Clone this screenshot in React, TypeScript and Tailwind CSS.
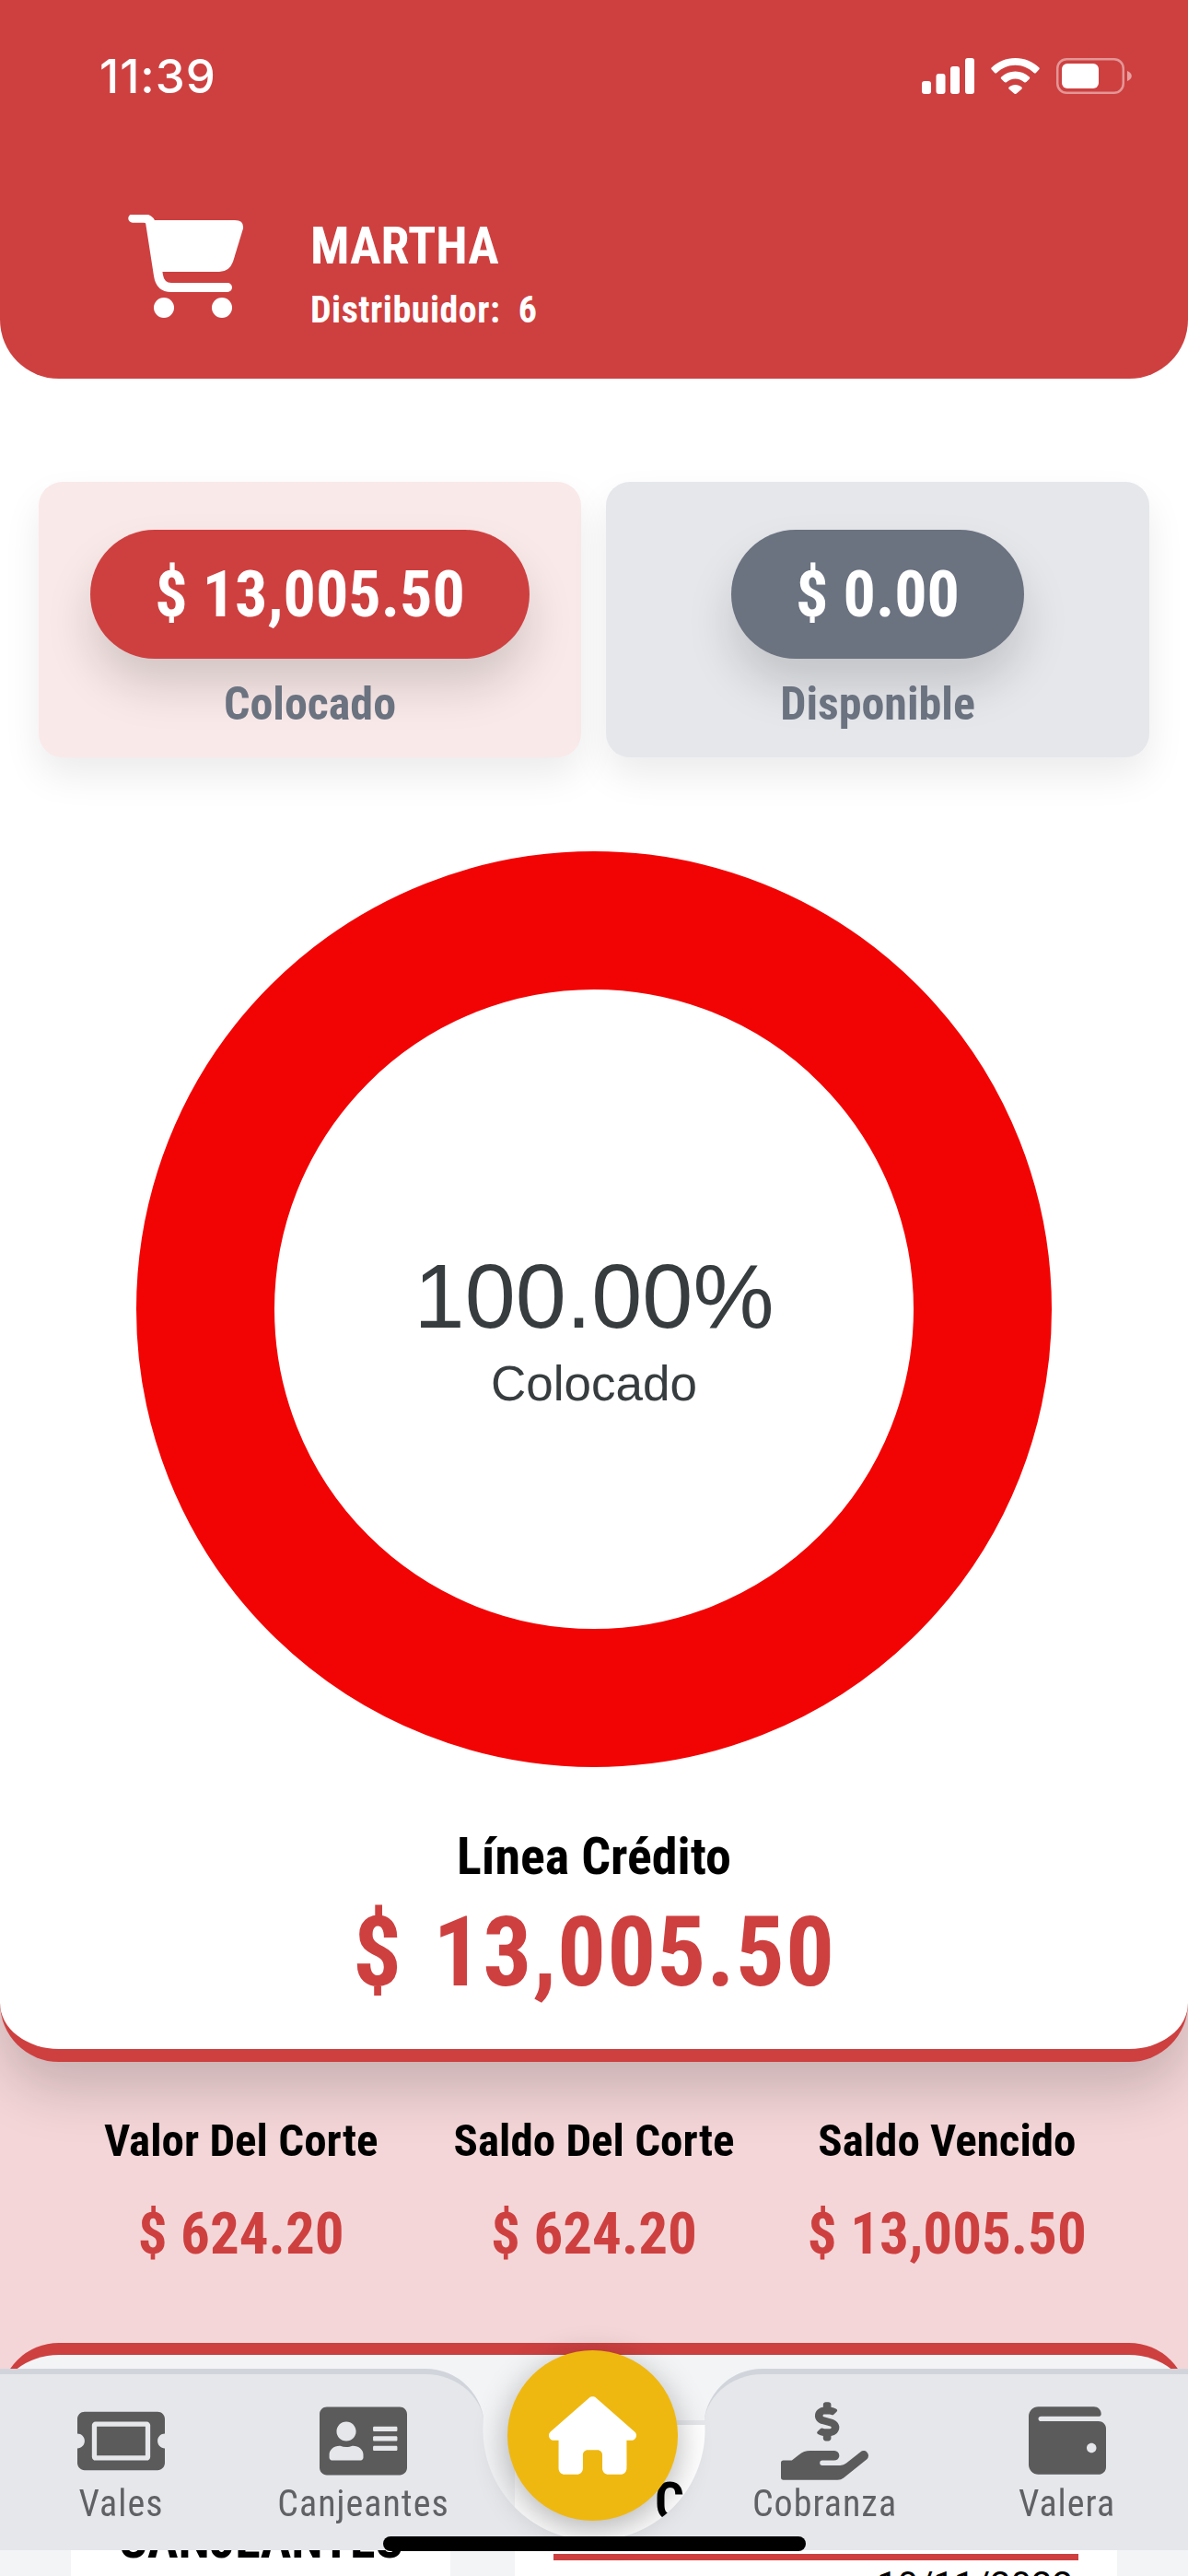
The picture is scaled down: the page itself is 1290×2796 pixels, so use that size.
import { FaAddressCard, FaHandHoldingUsd, FaTicketAlt, FaWallet } from "react-icons/fa";
import { FaHouse } from "react-icons/fa6";

const CONDENSED = "font-['Roboto_Condensed','Roboto',sans-serif] font-stretch-[75%]";

function StatusBar() {
  return (
    <div className="flex h-[40px] items-center justify-between pl-[108px] pr-[61px] text-white">
      <span className="font-['Inter',sans-serif] text-[51px] leading-none font-medium tracking-[1px]">11:39</span>
      <div className="flex items-end gap-[18px]">
        <svg viewBox="0 0 57 39" className="h-[39px] w-[57px]" fill="#fff">
          <rect x="0" y="25" width="10" height="14" rx="3" />
          <rect x="15.5" y="17" width="10" height="22" rx="3" />
          <rect x="31" y="9" width="10" height="30" rx="3" />
          <rect x="47" y="0" width="10" height="39" rx="3" />
        </svg>
        <svg viewBox="0 0 53 39" className="h-[39px] w-[53px]" fill="#fff">
          <path d="M26.5 0C16.5 0 7.5 3.8.8 10.200c-.7.7-.7 1.700 0 2.400l3.200 3.300c.7.7 1.700.7 2.400 0C11.700 11 18.800 7.700 26.500 7.700s14.800 3.300 20.100 8.200c.7.7 1.700.7 2.400 0l3.200-3.300c.7-.7.7-1.700 0-2.400C45.500 3.800 36.500 0 26.500 0z" />
          <path d="M26.500 14.500c-5.800 0-11.200 2.200-15.200 5.900-.7.7-.7 1.700 0 2.400l3.300 3.300c.6.6 1.600.7 2.300.1 2.600-2.300 6-3.700 9.600-3.700s7 1.400 9.600 3.700c.7.600 1.700.5 2.300-.1l3.300-3.300c.7-.7.7-1.700 0-2.400-4-3.700-9.400-5.900-15.200-5.900z" />
          <path d="M26.500 29c-2.600 0-5 .9-6.800 2.500-.7.6-.7 1.700 0 2.300l5.500 4.700c.7.7 1.900.7 2.600 0l5.500-4.700c.7-.6.7-1.700 0-2.300C31.500 29.900 29.100 29 26.500 29z" />
        </svg>
        <svg viewBox="0 0 82 39" className="h-[39px] w-[82px]" fill="none">
          <rect x="1.250" y="1.250" width="71.500" height="36.500" rx="10" stroke="#fff" strokeOpacity="0.45" strokeWidth="2.500" />
          <rect x="6" y="6" width="40" height="27" rx="6" fill="#fff" />
          <path d="M77 14c2.800 1 4.800 3 4.800 5.500S79.800 24 77 25z" fill="#fff" fillOpacity="0.5" />
        </svg>
      </div>
    </div>
  );
}

function CartIcon() {
  return (
    <svg viewBox="0 0 130 115" className="h-[115px] w-[130px]" fill="#fff">
      <path d="M5 4h12q7 0 8.500 7" fill="none" stroke="#fff" strokeWidth="9.500" strokeLinecap="round" />
      <path d="M20 6h96q10 0 9 9l-11 36q-4 11-15 11H30z" />
      <path d="M24 8l9 58q2 13 14 13h61" fill="none" stroke="#fff" strokeWidth="10" strokeLinecap="round" />
      <circle cx="39" cy="101" r="11" />
      <circle cx="102" cy="101" r="11" />
    </svg>
  );
}

function Header() {
  return (
    <header className="flex h-[411px] flex-col rounded-b-[64px] bg-[#CE4040] pt-[62px] text-white">
      <StatusBar />
      <div className="mt-[131px] flex items-start gap-[68px] pl-[139px]">
        <CartIcon />
        <div className={`${CONDENSED} pt-[4px]`}>
          <div className="text-[56px] leading-[60px] font-bold">MARTHA</div>
          <div className="mt-[17px] text-[40px] leading-[46px] font-bold tracking-[0.5px]">Distribuidor:&nbsp; 6</div>
        </div>
      </div>
    </header>
  );
}

function AmountCard({ amount, label, tone, pill }: { amount: string; label: string; tone: string; pill: string }) {
  return (
    <div className={`flex h-[299px] flex-col items-center rounded-[26px] pt-[52px] shadow-[0_20px_40px_rgba(0,0,0,0.08)] ${tone}`}>
      <div
        className={`${CONDENSED} flex h-[140px] items-center rounded-full text-[70px] leading-none font-bold text-white shadow-[0_30px_50px_rgba(0,0,0,0.15)] ${pill}`}
      >
        {amount}
      </div>
      <div className={`${CONDENSED} mt-[19px] text-[50px] leading-[60px] font-bold text-[#6B7280]`}>{label}</div>
    </div>
  );
}

function Donut() {
  return (
    <div className="relative mx-auto mt-[102px] h-[994px] w-[994px]">
      <svg viewBox="0 0 994 994" className="h-full w-full" fill="none">
        <circle cx="497" cy="497" r="422" stroke="#F30404" strokeWidth="150" />
      </svg>
      <div className="absolute inset-0 flex flex-col items-center justify-center pt-[42px] font-['Liberation_Sans',sans-serif] text-[#373D3F]">
        <div className="text-[99px] leading-[110px]">100.00%</div>
        <div className="mt-[10px] text-[53px] leading-[60px]">Colocado</div>
      </div>
    </div>
  );
}

function Stat({ label, value }: { label: string; value: string }) {
  return (
    <div className={`${CONDENSED} flex flex-col items-center font-bold`}>
      <div className="text-[49px] leading-[56px] text-black">{label}</div>
      <div className="mt-[37px] text-[63px] leading-[72px] text-[#CE4040]">{value}</div>
    </div>
  );
}

function NavItem({ icon, label }: { icon: React.ReactNode; label: string }) {
  return (
    <div className="flex w-[263px] flex-col items-center">
      <div className="flex h-[88px] items-center justify-center">{icon}</div>
      <div className={`${CONDENSED} mt-[1px] text-[40px] leading-[48px] tracking-[1px] text-[#5F6164]`}>{label}</div>
    </div>
  );
}

function BottomNav() {
  return (
    <>
      {/* bar with a round notch cut out around the home button */}
      <nav className="absolute inset-x-0 bottom-[28px] flex h-[197px] [mask-image:radial-gradient(circle_121px_at_645px_66px,transparent_120px,black_121px)]">
        <div className="flex w-[526px] justify-start rounded-tr-[64px] border-t-[6px] border-[#D1D5DB] bg-[#E5E7EB] pt-[28px]">
          <NavItem icon={<FaTicketAlt size={95} color="#5B5B5B" />} label="Vales" />
          <NavItem icon={<FaAddressCard size={95} color="#5B5B5B" />} label="Canjeantes" />
        </div>
        <div className="mt-[66px] flex-1 bg-[#E5E7EB]" />
        <div className="flex w-[526px] justify-start rounded-tl-[64px] border-t-[6px] border-[#D1D5DB] bg-[#E5E7EB] pt-[28px]">
          <NavItem icon={<FaHandHoldingUsd size={95} color="#5B5B5B" />} label="Cobranza" />
          <NavItem icon={<FaWallet size={84} color="#5B5B5B" />} label="Valera" />
        </div>
      </nav>
      <div className="absolute top-[2551px] left-[551px] flex h-[185px] w-[185px] items-center justify-center rounded-full bg-[#EFB810] shadow-[0_10px_36px_rgba(0,0,0,0.3)]">
        <FaHouse size={95} color="#fff" />
      </div>
      <div className="absolute bottom-[27px] left-[416px] h-[16px] w-[459px] rounded-full bg-black" />
    </>
  );
}

export default function App() {
  return (
    <div className="relative h-[2796px] w-[1290px] overflow-hidden bg-[#F4D6D8]">
      <main className="relative z-10 h-[2238px] rounded-b-[64px] border-b-[14px] border-[#CE4040] bg-white shadow-[0_30px_60px_rgba(0,0,0,0.18)]">
        <Header />
        <section className="mt-[112px] grid grid-cols-[589px_590px] justify-center gap-[27px]">
          <AmountCard amount="$ 13,005.50" label="Colocado" tone="bg-[#FAE9E9]" pill="bg-[#CE4040] px-[70px]" />
          <AmountCard amount="$ 0.00" label="Disponible" tone="bg-[#E5E7EB]" pill="bg-[#6B7280] px-[70px]" />
        </section>
        <Donut />
        <div className={`${CONDENSED} mt-[65px] flex flex-col items-center font-bold`}>
          <div className="text-[56px] leading-[64px] text-black">Línea Crédito</div>
          <div className="mt-[15px] text-[105px] leading-[116px] tracking-[1px] [word-spacing:8px] text-[#CE4040]">$ 13,005.50</div>
        </div>
      </main>

      <section className="grid grid-cols-3 px-[70px] pt-[58px]">
        <Stat label="Valor Del Corte" value="$ 624.20" />
        <Stat label="Saldo Del Corte" value="$ 624.20" />
        <Stat label="Saldo Vencido" value="$ 13,005.50" />
      </section>

      <section className="absolute inset-x-0 top-[2543px] h-[300px] rounded-t-[64px] border-t-[13px] border-[#CE4040] bg-[#F3F4F6]">
        <div className="flex gap-[70px] pt-[71px] pl-[77px]">
          <div className="h-[300px] w-[412px] bg-white text-center">
            <div className={`${CONDENSED} pt-[98px] text-[56px] leading-[64px] font-bold text-black`}>CANJEANTES</div>
          </div>
          <div className="h-[300px] w-[654px] border-t-[5px] border-[#E5E7EB] bg-white">
            <div className={`${CONDENSED} pt-[51px] pl-[152px] text-[56px] leading-[64px] font-bold tracking-[4px] text-black`}>CORTE</div>
            <div className="mx-[42px] mt-[25px] h-[7px] bg-[#CE4040]" />
            <div className="mt-[4px] pr-[48px] text-right font-['Roboto',sans-serif] text-[40px] leading-[48px] text-black">10/11/2022</div>
          </div>
        </div>
      </section>

      <BottomNav />
    </div>
  );
}
